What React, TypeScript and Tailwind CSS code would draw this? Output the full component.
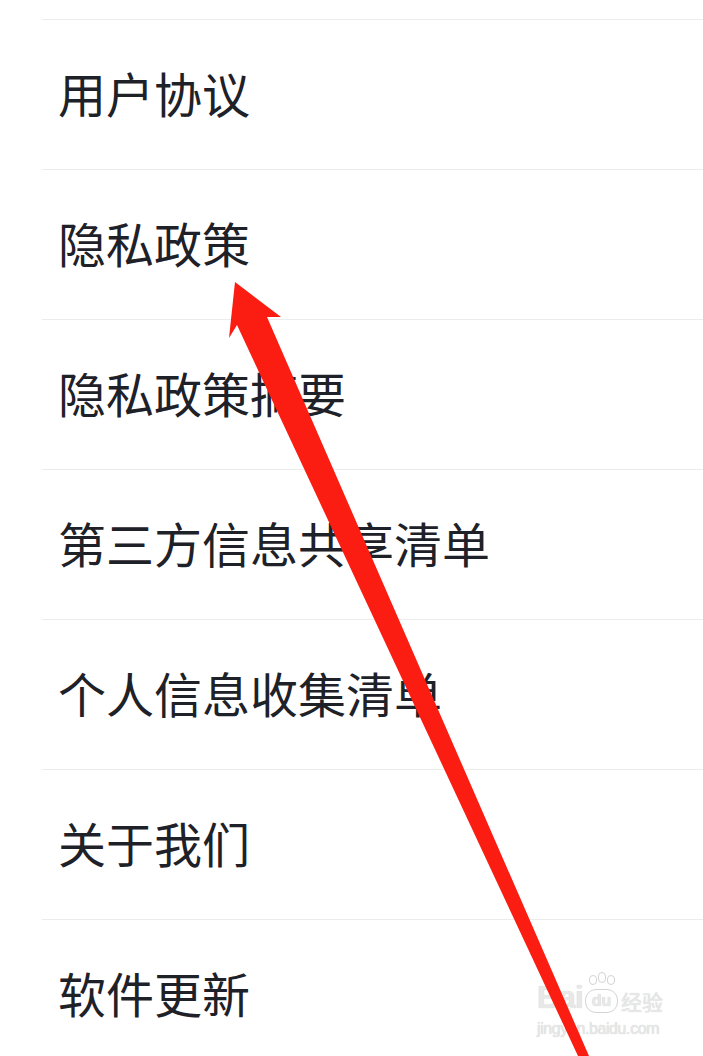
import React from 'react';

const items = [
  '用户协议',
  '隐私政策',
  '隐私政策摘要',
  '第三方信息共享清单',
  '个人信息收集清单',
  '关于我们',
  '软件更新',
];

function Arrow() {
  return (
    <svg
      className="absolute left-0 top-0 pointer-events-none"
      width="703"
      height="1056"
      viewBox="0 0 703 1056"
    >
      <polygon
        fill="#fb1d12"
        points="235,282 281,317 267,317 589,1056 578,1056 237,325 229,338"
      />
    </svg>
  );
}

function Watermark() {
  return (
    <div
      className="absolute left-[537px] top-[982px] flex flex-col text-[#e8e8e8] leading-none select-none"
      style={{ fontFamily: '"Liberation Sans", "Noto Sans CJK SC", sans-serif', textShadow: '0 0 1px #c8c8c8' }}
    >
      <div className="flex items-end">
        <span className="text-[31px] font-bold tracking-tight">Bai</span>
        <span className="relative ml-[2px] w-[33px] h-[24px] rounded-[11px] border border-[#d4d4d4] flex items-center justify-center text-[16px] font-bold">
          <span className="absolute left-[3px] -top-[15px] flex gap-[1px]">
            <span className="w-[8px] h-[10px] rounded-full border border-[#d4d4d4]" />
            <span className="w-[8px] h-[11px] rounded-full border border-[#d4d4d4] -mt-[3px]" />
            <span className="w-[8px] h-[10px] rounded-full border border-[#d4d4d4]" />
          </span>
          du
        </span>
        <span className="ml-[3px] text-[21px]">经验</span>
      </div>
      <div className="mt-[8px] text-[16px] tracking-tight">jingyan.baidu.com</div>
    </div>
  );
}

export default function App() {
  return (
    <div
      className="relative w-[703px] h-[1056px] overflow-hidden bg-white"
      style={{ fontFamily: '"Noto Sans CJK SC", "Noto Sans", sans-serif' }}
    >
      <div className="pl-[42px] pt-[19px]">
        {items.map((t) => (
          <div key={t} className="h-[150px] border-t border-[#ececec] flex items-center pl-[16px] pb-[6px]">
            <span className="text-[48px] leading-none text-[#1e2127]">{t}</span>
          </div>
        ))}
      </div>
      <Watermark />
      <Arrow />
    </div>
  );
}
